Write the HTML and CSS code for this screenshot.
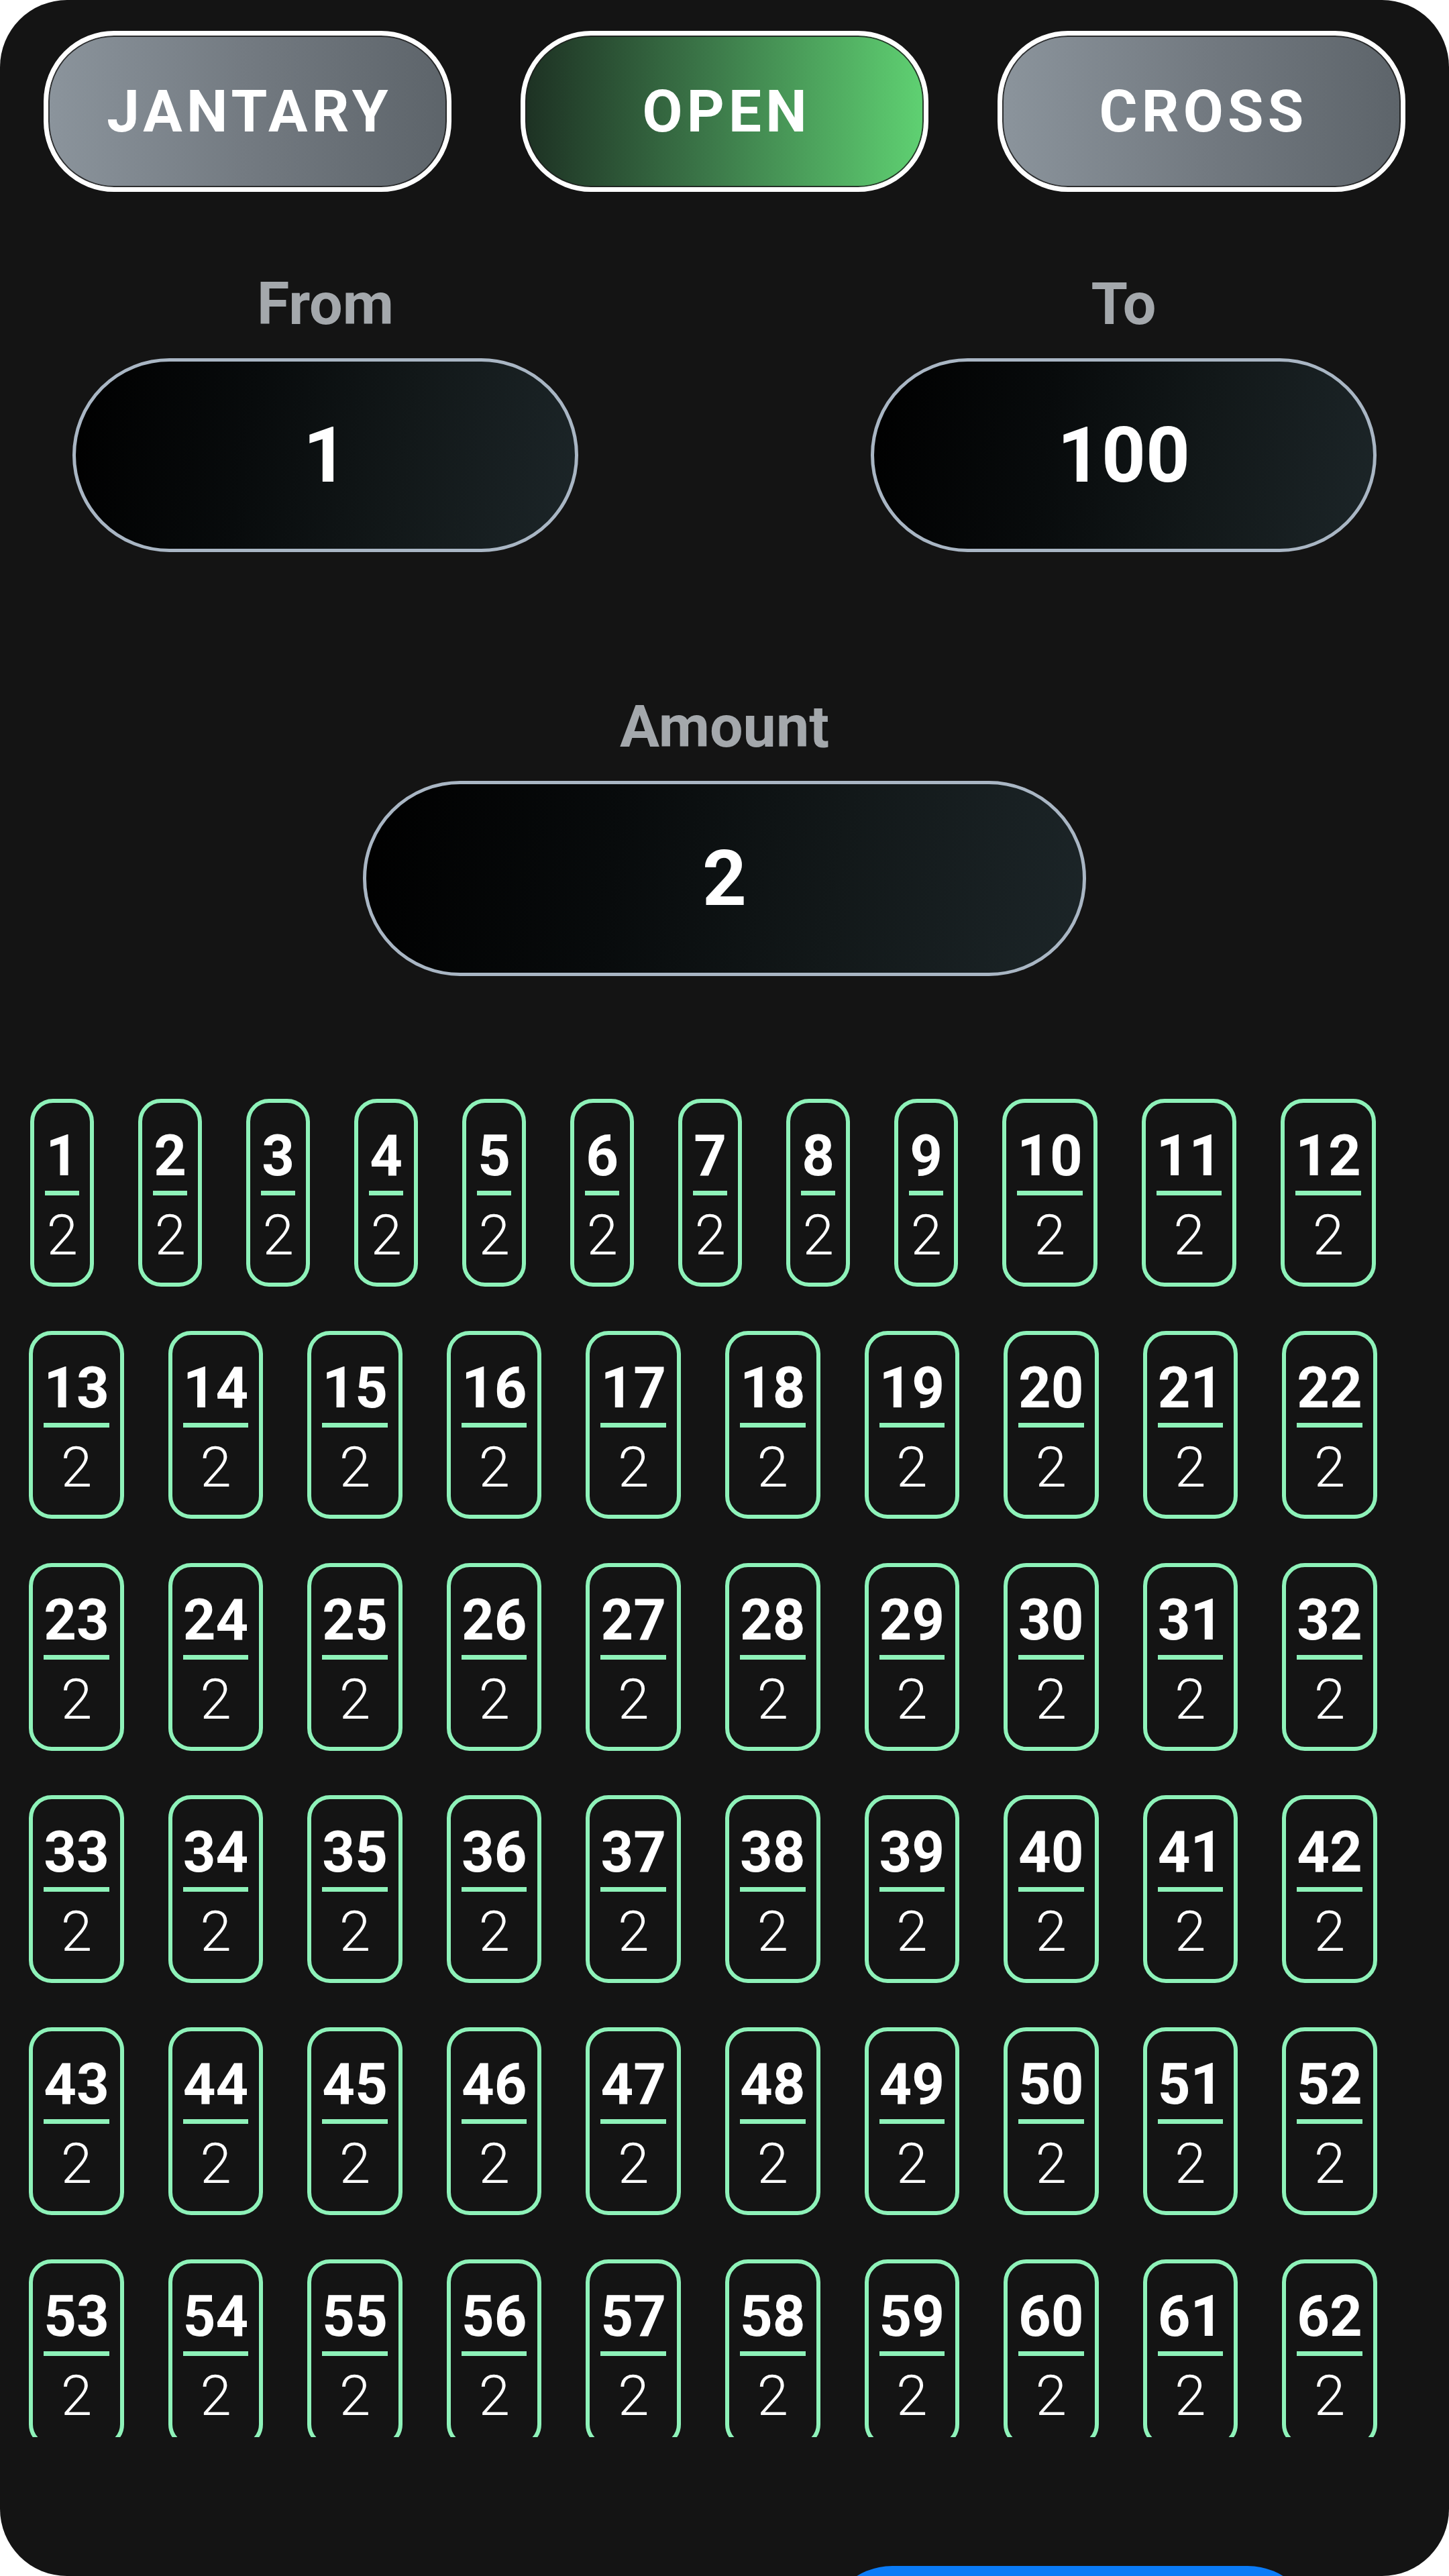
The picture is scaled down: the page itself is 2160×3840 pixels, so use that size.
FILE: index.html
```html
<!DOCTYPE html>
<html lang="en">
<head>
<meta charset="utf-8">
<title>Open</title>
<link rel="stylesheet" href="styles.css">
</head>
<body>
<div class="screen">
  <nav class="tabs">
    <div class="tab tab-gray">JANTARY</div>
    <div class="tab tab-green">OPEN</div>
    <div class="tab tab-gray">CROSS</div>
  </nav>

  <section class="range">
    <div class="field">
      <div class="label">From</div>
      <div class="input">1</div>
    </div>
    <div class="field">
      <div class="label">To</div>
      <div class="input">100</div>
    </div>
  </section>

  <section class="amount">
    <div class="label">Amount</div>
    <div class="input input-wide">2</div>
  </section>

  <div class="board">
    <div class="cell"><span class="num">1</span><span class="bar"></span><span class="den">2</span></div>
    <div class="cell"><span class="num">2</span><span class="bar"></span><span class="den">2</span></div>
    <div class="cell"><span class="num">3</span><span class="bar"></span><span class="den">2</span></div>
    <div class="cell"><span class="num">4</span><span class="bar"></span><span class="den">2</span></div>
    <div class="cell"><span class="num">5</span><span class="bar"></span><span class="den">2</span></div>
    <div class="cell"><span class="num">6</span><span class="bar"></span><span class="den">2</span></div>
    <div class="cell"><span class="num">7</span><span class="bar"></span><span class="den">2</span></div>
    <div class="cell"><span class="num">8</span><span class="bar"></span><span class="den">2</span></div>
    <div class="cell"><span class="num">9</span><span class="bar"></span><span class="den">2</span></div>
    <div class="cell"><span class="num">10</span><span class="bar"></span><span class="den">2</span></div>
    <div class="cell"><span class="num">11</span><span class="bar"></span><span class="den">2</span></div>
    <div class="cell"><span class="num">12</span><span class="bar"></span><span class="den">2</span></div>
    <div class="cell"><span class="num">13</span><span class="bar"></span><span class="den">2</span></div>
    <div class="cell"><span class="num">14</span><span class="bar"></span><span class="den">2</span></div>
    <div class="cell"><span class="num">15</span><span class="bar"></span><span class="den">2</span></div>
    <div class="cell"><span class="num">16</span><span class="bar"></span><span class="den">2</span></div>
    <div class="cell"><span class="num">17</span><span class="bar"></span><span class="den">2</span></div>
    <div class="cell"><span class="num">18</span><span class="bar"></span><span class="den">2</span></div>
    <div class="cell"><span class="num">19</span><span class="bar"></span><span class="den">2</span></div>
    <div class="cell"><span class="num">20</span><span class="bar"></span><span class="den">2</span></div>
    <div class="cell"><span class="num">21</span><span class="bar"></span><span class="den">2</span></div>
    <div class="cell"><span class="num">22</span><span class="bar"></span><span class="den">2</span></div>
    <div class="cell"><span class="num">23</span><span class="bar"></span><span class="den">2</span></div>
    <div class="cell"><span class="num">24</span><span class="bar"></span><span class="den">2</span></div>
    <div class="cell"><span class="num">25</span><span class="bar"></span><span class="den">2</span></div>
    <div class="cell"><span class="num">26</span><span class="bar"></span><span class="den">2</span></div>
    <div class="cell"><span class="num">27</span><span class="bar"></span><span class="den">2</span></div>
    <div class="cell"><span class="num">28</span><span class="bar"></span><span class="den">2</span></div>
    <div class="cell"><span class="num">29</span><span class="bar"></span><span class="den">2</span></div>
    <div class="cell"><span class="num">30</span><span class="bar"></span><span class="den">2</span></div>
    <div class="cell"><span class="num">31</span><span class="bar"></span><span class="den">2</span></div>
    <div class="cell"><span class="num">32</span><span class="bar"></span><span class="den">2</span></div>
    <div class="cell"><span class="num">33</span><span class="bar"></span><span class="den">2</span></div>
    <div class="cell"><span class="num">34</span><span class="bar"></span><span class="den">2</span></div>
    <div class="cell"><span class="num">35</span><span class="bar"></span><span class="den">2</span></div>
    <div class="cell"><span class="num">36</span><span class="bar"></span><span class="den">2</span></div>
    <div class="cell"><span class="num">37</span><span class="bar"></span><span class="den">2</span></div>
    <div class="cell"><span class="num">38</span><span class="bar"></span><span class="den">2</span></div>
    <div class="cell"><span class="num">39</span><span class="bar"></span><span class="den">2</span></div>
    <div class="cell"><span class="num">40</span><span class="bar"></span><span class="den">2</span></div>
    <div class="cell"><span class="num">41</span><span class="bar"></span><span class="den">2</span></div>
    <div class="cell"><span class="num">42</span><span class="bar"></span><span class="den">2</span></div>
    <div class="cell"><span class="num">43</span><span class="bar"></span><span class="den">2</span></div>
    <div class="cell"><span class="num">44</span><span class="bar"></span><span class="den">2</span></div>
    <div class="cell"><span class="num">45</span><span class="bar"></span><span class="den">2</span></div>
    <div class="cell"><span class="num">46</span><span class="bar"></span><span class="den">2</span></div>
    <div class="cell"><span class="num">47</span><span class="bar"></span><span class="den">2</span></div>
    <div class="cell"><span class="num">48</span><span class="bar"></span><span class="den">2</span></div>
    <div class="cell"><span class="num">49</span><span class="bar"></span><span class="den">2</span></div>
    <div class="cell"><span class="num">50</span><span class="bar"></span><span class="den">2</span></div>
    <div class="cell"><span class="num">51</span><span class="bar"></span><span class="den">2</span></div>
    <div class="cell"><span class="num">52</span><span class="bar"></span><span class="den">2</span></div>
    <div class="cell"><span class="num">53</span><span class="bar"></span><span class="den">2</span></div>
    <div class="cell"><span class="num">54</span><span class="bar"></span><span class="den">2</span></div>
    <div class="cell"><span class="num">55</span><span class="bar"></span><span class="den">2</span></div>
    <div class="cell"><span class="num">56</span><span class="bar"></span><span class="den">2</span></div>
    <div class="cell"><span class="num">57</span><span class="bar"></span><span class="den">2</span></div>
    <div class="cell"><span class="num">58</span><span class="bar"></span><span class="den">2</span></div>
    <div class="cell"><span class="num">59</span><span class="bar"></span><span class="den">2</span></div>
    <div class="cell"><span class="num">60</span><span class="bar"></span><span class="den">2</span></div>
    <div class="cell"><span class="num">61</span><span class="bar"></span><span class="den">2</span></div>
    <div class="cell"><span class="num">62</span><span class="bar"></span><span class="den">2</span></div>
  </div>

  <footer class="footer">
    <div class="submit"></div>
  </footer>
</div>
</body>
</html>
```

FILE: styles.css
```css
html, body {
  margin: 0;
  padding: 0;
  background: #ffffff;
}

body {
  font-family: Roboto, "Noto Sans", "Liberation Sans", sans-serif;
}

.screen {
  width: 2160px;
  height: 3840px;
  background: #141414;
  border-radius: 100px;
  overflow: hidden;
  display: flex;
  flex-direction: column;
  box-sizing: border-box;
}

/* ---------- top tabs ---------- */
.tabs {
  display: flex;
  justify-content: space-between;
  padding: 46px 65px 0 65px;
}

.tab {
  width: 608px;
  height: 240px;
  box-sizing: border-box;
  border: 7px solid #ffffff;
  border-radius: 105px;
  box-shadow: inset 0 0 0 2px rgba(30, 30, 30, 0.85);
  display: flex;
  align-items: center;
  justify-content: center;
  color: #ffffff;
  font-weight: 700;
  font-size: 87px;
  letter-spacing: 0.072em;
  padding-left: 0.072em;
}

.tab-gray {
  background: linear-gradient(90deg, #8b949c 0%, #737a81 50%, #5d646a 100%);
}

.tab-green {
  background: linear-gradient(90deg, #1d3123 0%, #3b7648 45%, #5fd172 100%);
}

/* ---------- fields ---------- */
.range {
  display: flex;
  justify-content: space-between;
  padding: 0 108px 0 108px;
  margin-top: 115px;
}

.field {
  width: 754px;
  display: flex;
  flex-direction: column;
  align-items: center;
}

.label {
  color: #a4a8ac;
  font-weight: 700;
  font-size: 88px;
  line-height: normal;
  margin-bottom: 30px;
}

.input {
  width: 100%;
  height: 289px;
  box-sizing: border-box;
  border: 5px solid #a9b6c4;
  border-radius: 145px;
  background: linear-gradient(100deg, #000000 0%, #080b0c 35%, #121819 65%, #1c2528 100%);
  display: flex;
  align-items: center;
  justify-content: center;
  color: #ffffff;
  font-weight: 700;
  font-size: 115px;
}

.amount {
  margin-top: 208px;
  display: flex;
  flex-direction: column;
  align-items: center;
}

.input-wide {
  width: 1078px;
  height: 291px;
}

/* ---------- board ---------- */
.board {
  margin-top: 183px;
  height: 1995px;
  overflow: hidden;
  display: flex;
  flex-wrap: wrap;
  justify-content: center;
  align-content: flex-start;
  gap: 66px 66px;
  padding-right: 64px;
  flex-shrink: 0;
}

.cell {
  box-sizing: border-box;
  min-width: 95px;
  border: 6px solid #8ef2b9;
  border-radius: 34px;
  padding: 29px 16px 21px 16px;
  display: flex;
  flex-direction: column;
  color: #ffffff;
}

.num {
  font-weight: 700;
  font-size: 85px;
  line-height: 100px;
  text-align: center;
}

.bar {
  height: 7px;
  margin-top: 2px;
  background: #8ef2b9;
}

.den {
  font-weight: 300;
  font-size: 84px;
  line-height: 98px;
  margin-top: 11px;
  text-align: center;
}

/* ---------- footer ---------- */
.footer {
  margin-top: 192px;
  display: flex;
  justify-content: flex-end;
  padding-right: 200px;
}

.submit {
  width: 730px;
  height: 200px;
  border-radius: 100px;
  background: #0b7cf7;
  flex-shrink: 0;
}
```
